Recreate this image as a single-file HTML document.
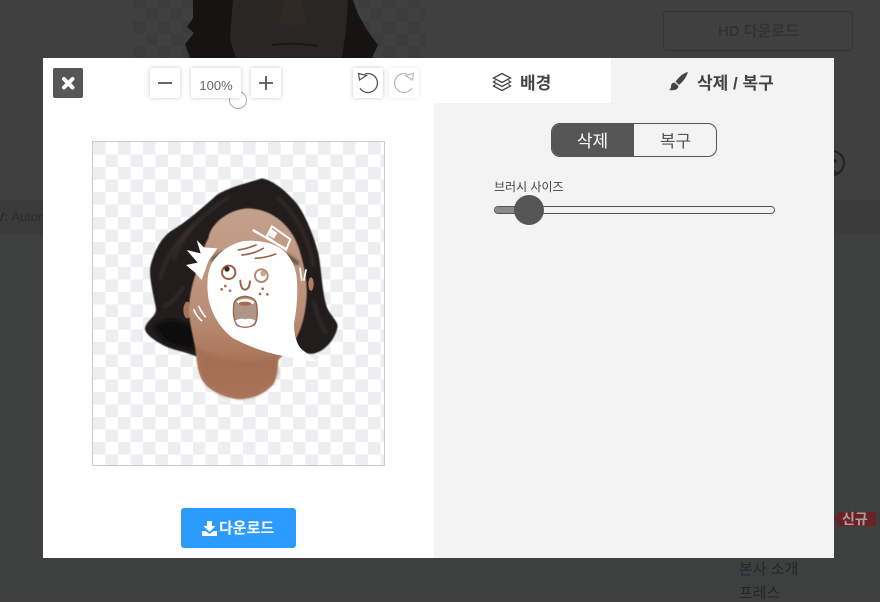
<!DOCTYPE html>
<html lang="ko"><head><meta charset="utf-8"><title>배경 삭제</title>
<style>
html,body{margin:0;padding:0;width:880px;height:598px;overflow:hidden;background:#404040;font-family:"Liberation Sans","Noto Sans CJK KR",sans-serif}
.a{position:absolute;box-sizing:border-box}
.t{position:absolute;white-space:nowrap;line-height:1}
.btn{position:absolute;top:68px;height:30px;background:#fff;border-radius:2px;box-shadow:0 0 4px rgba(0,0,0,.22)}
.btn svg{position:absolute;left:0;top:0}
</style></head>
<body>
<!-- dimmed background page -->
<div class="a" style="left:0;top:0;width:880px;height:598px;background:#404040">
  <div class="a" style="left:0;top:200px;width:880px;height:35px;background:#3b3b3b"></div>
  <div class="a" style="left:0;top:235px;width:880px;height:363px;background:#3e3f3f"></div>
  <div class="a" style="left:133px;top:0;width:292px;height:58px;background-image:conic-gradient(#404040 25%,#3c3c3c 25% 50%,#404040 50% 75%,#3c3c3c 75%);background-size:25px 25px;background-position:0 -4px"></div>
  <svg class="a" style="left:0;top:0" width="880" height="598">
    <path d="M193 0L193 18L187 27L194 33L185 44L190 58L372 58L378 45L367 30L358 14L353 0Z" fill="#151412"/>
    <path d="M233 0L231 25L230 40L236 58L342 58L346 30L348 0Z" fill="#2a2623"/>
    <path d="M284 0Q283 14 279 20Q281 25 293 25Q306 25 308 20Q304 14 303 0Z" fill="#302a27"/>
    <path d="M272 45Q292 42 318 46" stroke="#1d1917" stroke-width="2" fill="none"/>
    <circle cx="832" cy="163" r="12" fill="none" stroke="#222" stroke-width="2"/>
    <circle cx="835" cy="161" r="1.800" fill="#222"/>
    <path d="M834 171l4 3" stroke="#222" stroke-width="2"/>
    <path d="M834 519l5-7h36q1 0 1 1v12q0 1-1 1h-36z" fill="#6a2226"/>
  </svg>
  <div class="a" style="left:663px;top:11px;width:190px;height:40px;border:1px solid #343434;border-radius:4px"></div>
  <div class="t" style="left:718px;top:24px;font-size:15px;font-weight:700;color:#333335">HD 다운로드</div>
  <div class="t" style="left:-4px;top:210px;font-size:13px;color:#2b2b2b"><b>V:</b> Automatic</div>
  <div class="t" style="left:842px;top:512px;font-size:14px;font-weight:700;color:#a89f9f">신규</div>
  <div class="t" style="left:739px;top:562px;font-size:15px;color:#23262b">본사 소개</div>
  <div class="t" style="left:739px;top:586px;font-size:15px;color:#23262b">프레스</div>
</div>

<!-- modal -->
<div class="a" style="left:43px;top:58px;width:791px;height:500px;background:#fff"></div>
<div class="a" style="left:434px;top:58px;width:400px;height:500px;background:#f3f3f3"></div>
<div class="a" style="left:434px;top:58px;width:177px;height:45px;background:#fff"></div>

<!-- zoom slider handle -->
<div class="a" style="left:229px;top:91px;width:18px;height:18px;border:1px solid #aaa;border-radius:50%;background:#fff"></div>

<!-- close -->
<div class="a" style="left:53px;top:68px;width:30px;height:30px;background:#565656;border-radius:2px">
  <svg width="30" height="30"><path d="M11 11L19.500 19.500M19.500 11L11 19.500" stroke="#fff" stroke-width="4" stroke-linecap="round"/></svg>
</div>
<div class="btn" style="left:150px;width:30px"><svg width="30" height="30"><path d="M8 15H22" stroke="#555" stroke-width="1.800"/></svg></div>
<div class="btn" style="left:191px;width:50px"><div class="t" style="left:0;width:50px;text-align:center;top:11px;font-size:13px;color:#666">100%</div></div>
<div class="btn" style="left:251px;width:30px"><svg width="30" height="30"><path d="M8 15H22M15 8V22" stroke="#555" stroke-width="1.800"/></svg></div>
<div class="btn" style="left:353px;width:30px"><svg width="30" height="30"><path d="M12 6A9.500 9.500 0 1 1 7 20.200" fill="none" stroke="#555" stroke-width="1.300"/><path d="M5.500 5.500L13.500 7.500L6.500 12Z" fill="#fff" stroke="#555" stroke-width="1.200"/></svg></div>
<div class="btn" style="left:389px;width:30px;box-shadow:0 0 4px rgba(0,0,0,.1)"><svg width="30" height="30"><path d="M18 6A9.500 9.500 0 1 0 23 20.200" fill="none" stroke="#bbb" stroke-width="1.300"/><path d="M24.500 5.500L16.500 7.500L23.500 12Z" fill="#fff" stroke="#bbb" stroke-width="1.200"/></svg></div>

<!-- canvas -->
<div class="a" style="left:92px;top:141px;width:293px;height:325px;border:1px solid #ccc;background-color:#fff;background-image:conic-gradient(#fff 25%,#eceef0 25% 50%,#fff 50% 75%,#eceef0 75%);background-size:25px 25px"></div>

<svg class="a" style="left:0;top:0" width="880" height="598">
  <defs>
    <linearGradient id="sk" x1="0" y1="0" x2="0" y2="1">
      <stop offset="0" stop-color="#c4a18c"/><stop offset=".55" stop-color="#ba8e76"/><stop offset=".8" stop-color="#a97458"/><stop offset="1" stop-color="#b38066"/>
    </linearGradient>
    <filter id="b"><feGaussianBlur stdDeviation="5"/></filter>
    <filter id="b2"><feGaussianBlur stdDeviation="1.500"/></filter>
  </defs>
  <g transform="translate(130,160) scale(.33333)">
    <!-- hair -->
    <path filter="url(#b2)" d="M395 55C430 60 470 95 500 130C530 170 555 240 565 280C575 330 575 390 590 440C600 465 620 480 623 497C620 530 590 570 555 580C535 585 515 578 502 555L430 300L200 590C170 575 120 570 90 550C65 535 45 520 45 505C50 480 80 470 78 445C70 400 55 350 62 315C75 270 90 240 120 215C170 185 210 150 260 105C300 80 350 70 395 55Z" fill="#231d1a"/>
    <path filter="url(#b)" d="M70 500Q120 460 190 500L195 570L110 550Z" fill="#0c0e0b"/>
    <g fill="none" stroke="#41362f" stroke-width="6" filter="url(#b)">
      <path d="M130 300Q170 190 300 110"/><path d="M90 360Q110 260 220 170"/><path d="M440 110Q530 190 550 320"/><path d="M550 420Q570 500 590 520"/><path d="M100 440Q140 420 160 380"/>
    </g>
    <!-- ears -->
    <ellipse cx="543" cy="372" rx="8" ry="20" fill="#b17e62"/>
    <ellipse cx="172" cy="450" rx="12" ry="25" fill="#a87257"/>
    <!-- face and neck -->
    <path filter="url(#b2)" d="M235 235C240 195 290 150 350 145C420 145 480 190 505 260C525 320 532 370 530 410C525 470 515 510 490 550C470 575 455 590 445 600C442 630 440 655 430 672C410 695 385 712 330 718C290 715 245 695 225 672C205 650 200 610 197 570C190 530 175 480 177 440C180 390 195 340 215 295C220 270 225 250 235 235Z" fill="url(#sk)"/>
    <path filter="url(#b)" d="M198 560Q300 625 440 590L445 640L430 672L380 710L330 718L270 705L225 672Z" fill="#a06a4f" opacity=".55"/>
    <path filter="url(#b)" d="M245 300L285 275M470 285L505 312" stroke="#4a3a33" stroke-width="10" fill="none"/>
    <!-- ghost -->
    <path d="M340 243Q410 238 452 265Q492 295 500 350Q506 420 492 490Q492 540 512 565L560 605Q510 600 470 590Q385 575 310 535Q255 495 236 420Q225 350 245 310Q275 260 340 243Z" fill="#fff"/>
    <path d="M200 240L222 262L262 265L236 302L215 360L195 338L168 315L203 308L170 270L212 280Z" fill="#fff"/>
    <!-- hat -->
    <path d="M368 210L470 268" stroke="#fff" stroke-width="7" fill="none"/>
    <path d="M426 199L481 238L468 270L410 230Z" fill="none" stroke="#fff" stroke-width="6"/>
    <path d="M425 207L442 219L432 236L416 226Z" fill="#fff"/>
    <!-- strokes -->
    <path d="M192 450Q200 470 215 482M207 440Q215 458 226 470M510 325L515 360M528 330L522 360" stroke="#fff" stroke-width="5" fill="none" stroke-linecap="round"/>
    <!-- face details -->
    <g fill="none" stroke="#9d6148" stroke-linecap="round">
      <path d="M325 270Q352 266 378 255" stroke-width="5"/>
      <path d="M336 285Q372 282 400 265" stroke-width="5"/>
      <path d="M376 295Q410 293 437 282" stroke-width="5"/>
      <circle cx="296" cy="337" r="20" stroke-width="6"/>
      <circle cx="394" cy="347" r="19" stroke-width="6" stroke="#b48a70"/>
      <path d="M331 362Q332 388 345 389Q358 388 360 364" stroke-width="6"/>
    </g>
    <circle cx="291" cy="327" r="8" fill="#3a2a24"/>
    <circle cx="400" cy="340" r="9" fill="#c9a88f"/>
    <g fill="#a5694e">
      <circle cx="286" cy="378" r="4"/><circle cx="275" cy="388" r="4"/><circle cx="300" cy="392" r="4"/>
      <circle cx="398" cy="386" r="4"/><circle cx="390" cy="402" r="4"/><circle cx="412" cy="403" r="4"/>
    </g>
    <!-- mouth -->
    <path d="M345 409Q378 412 380 435Q386 480 372 495Q345 508 320 495Q306 470 312 430Q316 412 345 409Z" fill="#ae9585" stroke="#9d6148" stroke-width="4"/>
    <path d="M320 424Q345 410 372 424Q374 432 365 432Q345 418 328 434Z" fill="#fff"/>
    <ellipse cx="345" cy="431" rx="19" ry="6" fill="#a5694e"/>
    <path d="M316 482Q335 472 345 478Q360 472 376 482Q370 500 345 500Q322 500 316 482Z" fill="#fff"/>
  </g>
</svg>

<!-- download -->
<div class="a" style="left:181px;top:508px;width:115px;height:40px;background:#2b9bfe;border-radius:3px">
  <svg class="a" style="left:21px;top:13px" width="15" height="15"><path d="M5 0H10V5H13.500L7.500 11L1.500 5H5Z" fill="#fff"/><path d="M0 10H3.500L7.500 13L11.500 10H15V15H0Z" fill="#fff"/></svg>
  <div class="t" style="left:38px;top:13px;font-size:15px;font-weight:700;color:#fff">다운로드</div>
</div>

<!-- tabs -->
<svg class="a" style="left:492px;top:72px" width="20" height="20" fill="none" stroke="#444" stroke-width="1.300"><path d="M10 1.500L18.500 6L10 10.500L1.500 6Z"/><path d="M3.500 8.500L1.500 10L10 14.500L18.500 10L16.500 8.500"/><path d="M3.500 12.500L1.500 14L10 18.500L18.500 14L16.500 12.500"/></svg>
<div class="t" style="left:520px;top:75px;font-size:17px;font-weight:700;color:#444">배경</div>
<svg class="a" style="left:668px;top:71px" width="21" height="21"><path d="M20 1Q14 2 7.500 10.500L11 14Q18 8 20 1Z" fill="#444"/><path d="M6.500 11.500Q3 12 3 15Q3 18 1 19Q7 20 9.500 17.500Q11 15.500 10 14.500Z" fill="#444"/></svg>
<div class="t" style="left:697px;top:75px;font-size:17px;font-weight:700;color:#444">삭제 / 복구</div>

<!-- toggle -->
<div class="a" style="left:551px;top:123px;width:166px;height:34px;border:1px solid #555;border-radius:9px;overflow:hidden">
  <div class="a" style="left:0;top:0;width:82px;height:32px;background:#565656"></div>
</div>
<div class="t" style="left:551px;width:83px;text-align:center;top:133px;font-size:17px;color:#fff">삭제</div>
<div class="t" style="left:634px;width:83px;text-align:center;top:133px;font-size:17px;color:#555">복구</div>

<!-- brush size -->
<div class="t" style="left:494px;top:181px;font-size:12px;color:#444">브러시 사이즈</div>
<div class="a" style="left:494px;top:206px;width:281px;height:8px;border:1px solid #555;border-radius:4px;overflow:hidden">
  <div class="a" style="left:0;top:0;width:36px;height:6px;background:#8a8a8a"></div>
</div>
<div class="a" style="left:513.500px;top:195px;width:30px;height:30px;border-radius:50%;background:#565656"></div>
</body></html>
